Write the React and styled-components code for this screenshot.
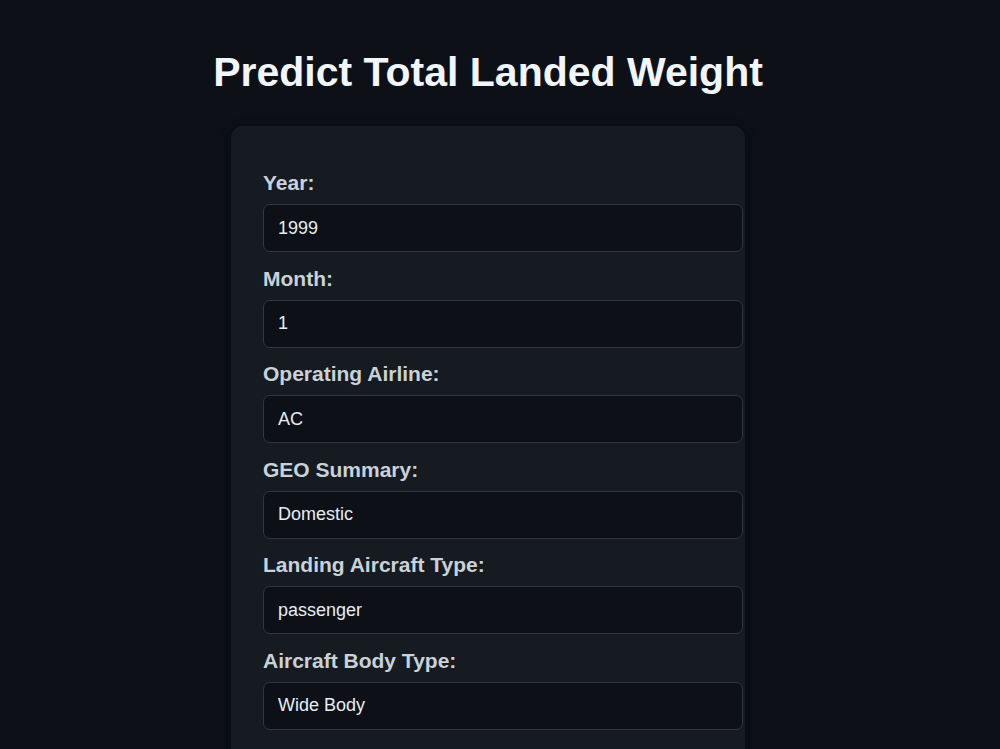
import React from 'react';
import styled, { createGlobalStyle } from 'styled-components';

const GlobalStyle = createGlobalStyle`
  html, body {
    margin: 0;
    padding: 0;
    background: #0d1117;
    font-family: "Liberation Sans", Arial, sans-serif;
  }
`;

const Page = styled.div`
  min-height: 100vh;
  padding: 49px 24px 40px 0;
  display: flex;
  flex-direction: column;
  align-items: center;
  box-sizing: border-box;
`;

const Title = styled.h1`
  margin: 0 0 30px;
  font-size: 41px;
  font-weight: bold;
  color: #f0f6fc;
`;

const Card = styled.form`
  width: 450px;
  padding: 45px 32px 32px;
  background: #161b22;
  border-radius: 12px;
  box-shadow: 0 4px 14px rgba(0, 0, 0, 0.45);
`;

const Field = styled.div`
  margin-bottom: 14.6px;
`;

const Label = styled.label`
  display: block;
  margin-bottom: 9px;
  font-size: 21px;
  line-height: 24px;
  font-weight: bold;
  color: #c9d1d9;
`;

const Input = styled.input`
  display: block;
  width: 100%;
  height: 22px;
  padding: 12px 14px;
  border: 1px solid #30363d;
  border-radius: 7px;
  background: #0d1117;
  color: #e6edf3;
  font-family: "Liberation Sans", Arial, sans-serif;
  font-size: 18px;
  outline: none;
`;

const fields = [
  { id: 'year', label: 'Year:', value: '1999' },
  { id: 'month', label: 'Month:', value: '1' },
  { id: 'airline', label: 'Operating Airline:', value: 'AC' },
  { id: 'geo', label: 'GEO Summary:', value: 'Domestic' },
  { id: 'aircraftType', label: 'Landing Aircraft Type:', value: 'passenger' },
  { id: 'bodyType', label: 'Aircraft Body Type:', value: 'Wide Body' },
  { id: 'landingCount', label: 'Landing Count:', value: '1' },
  { id: 'manufacturer', label: 'Aircraft Manufacturer:', value: 'Boeing' },
];

export default function App() {
  return (
    <>
      <GlobalStyle />
      <Page>
        <Title>Predict Total Landed Weight</Title>
        <Card onSubmit={(e) => e.preventDefault()}>
          {fields.map((f) => (
            <Field key={f.id}>
              <Label htmlFor={f.id}>{f.label}</Label>
              <Input id={f.id} defaultValue={f.value} />
            </Field>
          ))}
        </Card>
      </Page>
    </>
  );
}
